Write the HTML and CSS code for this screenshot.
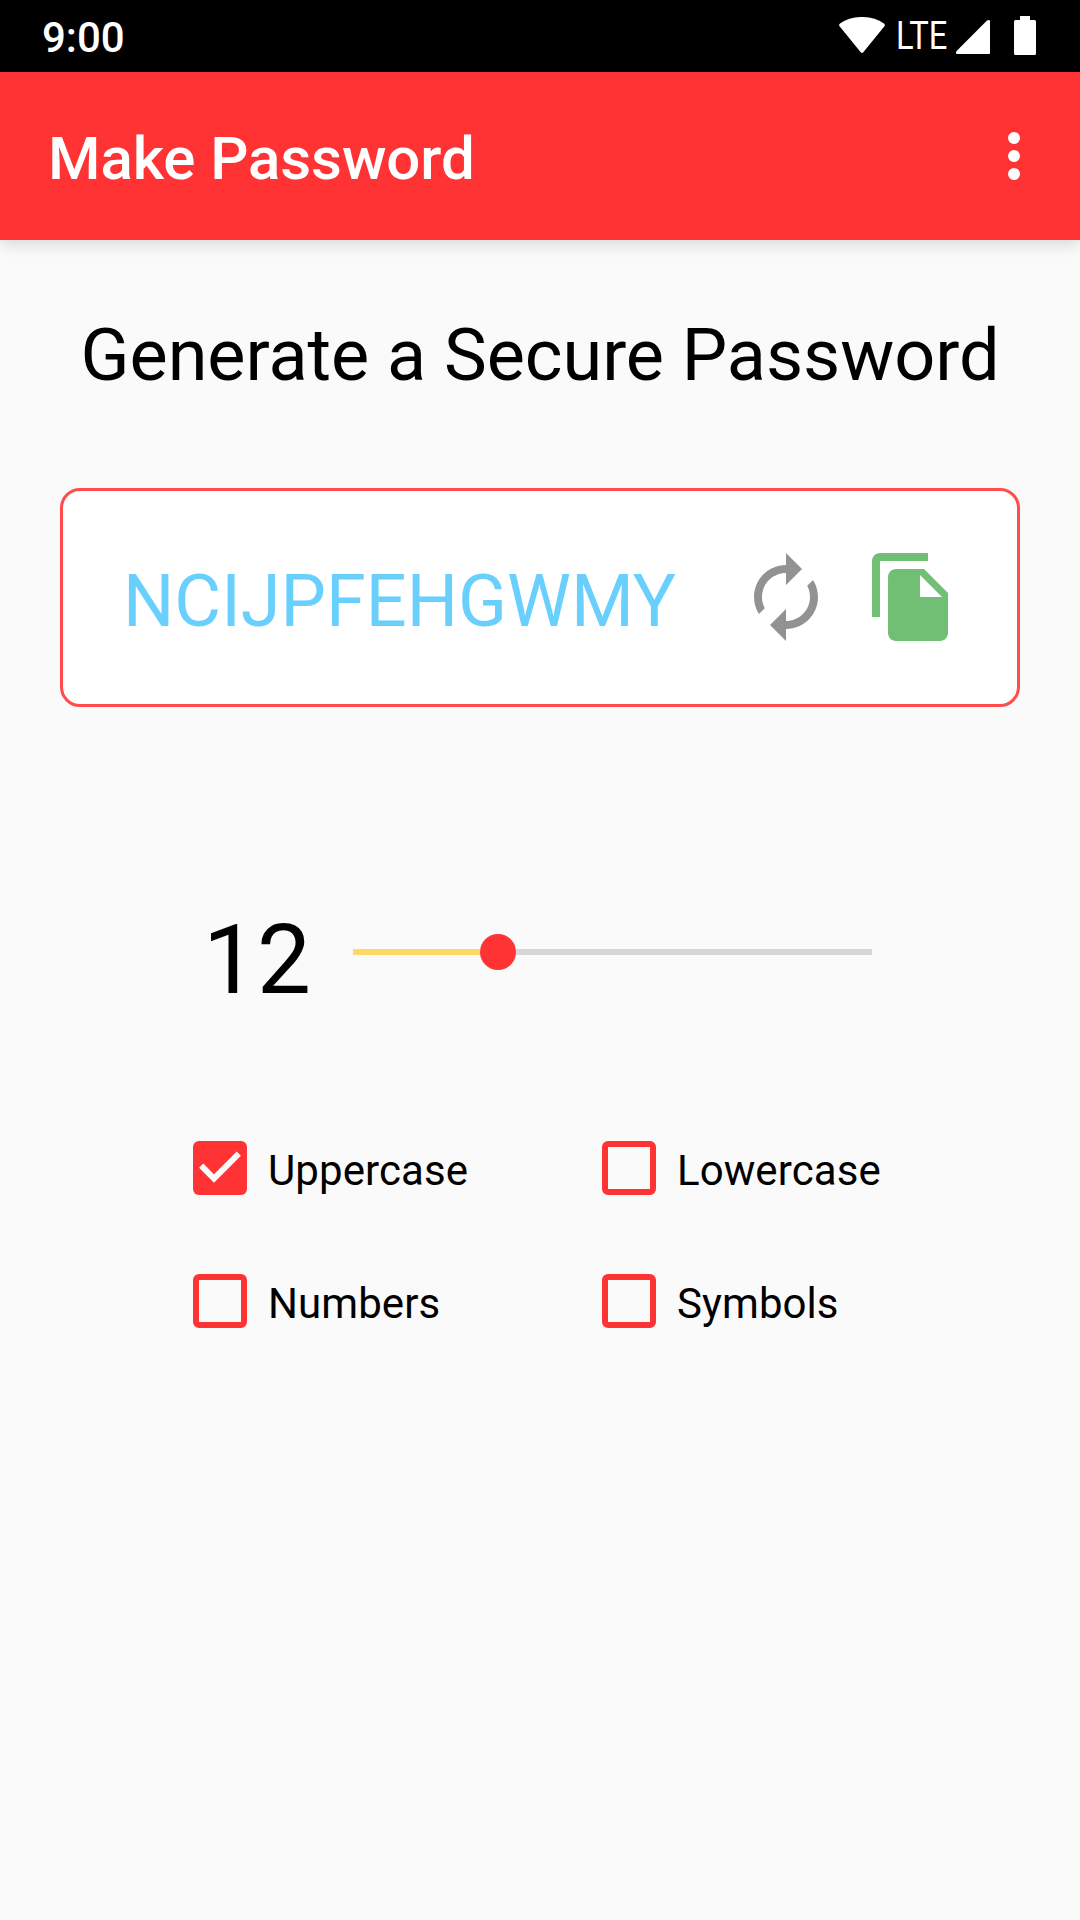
FILE: index.html
```html
<!DOCTYPE html>
<html lang="en">
<head>
<meta charset="utf-8">
<title>Make Password</title>
<link rel="stylesheet" href="styles.css">
</head>
<body>
<div class="status">
  <span class="time">9:00</span>
  <div class="indicators">
    <svg class="wifi" viewBox="0 0 46 36"><path d="M.6 9.200Q-.6 7.700 1 6.500C13-2.200 33-2.200 45 6.500Q46.600 7.700 45.400 9.200L24.500 35Q23 36.800 21.500 35Z" fill="#fff"/></svg>
    <span class="lte">LTE</span>
    <svg class="signal" viewBox="0 0 34 34"><path d="M31 .6Q32 0 33 0Q34 0 34 1V33Q34 34 33 34H1Q0 34 0 33Q0 32 .6 31Z" fill="#fff"/></svg>
    <svg class="battery" viewBox="0 0 22 39"><path d="M6 0H16V4H20.500Q22 4 22 5.500V37.500Q22 39 20.500 39H1.500Q0 39 0 37.500V5.500Q0 4 1.500 4H6Z" fill="#fff"/></svg>
  </div>
</div>
<header class="appbar">
  <h1 class="title">Make Password</h1>
  <svg class="more" viewBox="0 0 12 48" fill="#fff"><circle cx="6" cy="6" r="6"/><circle cx="6" cy="24" r="6"/><circle cx="6" cy="42" r="6"/></svg>
</header>
<main class="content">
  <h2 class="heading">Generate a Secure Password</h2>
  <section class="card">
    <span class="password">NCIJPFEHGWMY</span>
    <svg class="refresh" viewBox="0 0 24 24"><path fill="#929292" d="M12 6v3l4-4-4-4v3c-4.42 0-8 3.58-8 8 0 1.57.46 3.03 1.24 4.26L6.7 14.8c-.45-.83-.7-1.79-.7-2.8 0-3.31 2.69-6 6-6zm6.76 1.74L17.3 9.2c.44.84.7 1.79.7 2.8 0 3.31-2.69 6-6 6v-3l-4 4 4 4v-3c4.42 0 8-3.58 8-8 0-1.57-.46-3.03-1.24-4.26z"/></svg>
    <svg class="copy" viewBox="0 0 24 24"><path fill="#71bf74" d="M16 1H4c-1.100 0-2 .9-2 2v14h2V3h12V1zm-1 4l6 6v10c0 1.100-.9 2-2 2H7.990C6.890 23 6 22.100 6 21l.01-14c0-1.100.89-2 1.990-2h7zm-1 7h5.500L14 6.500V12z"/></svg>
  </section>
  <section class="length">
    <span class="number">12</span>
    <div class="track"><div class="fill"></div><div class="thumb"></div><div class="rest"></div></div>
  </section>
  <section class="options">
    <label class="option"><span class="box checked"><svg viewBox="0 0 54 54"><path d="M8.200 24.700L21 37.500L45.800 12.700" fill="none" stroke="#fafafa" stroke-width="6"/></svg></span><span class="label">Uppercase</span></label>
    <label class="option"><span class="box"></span><span class="label">Lowercase</span></label>
    <label class="option"><span class="box"></span><span class="label">Numbers</span></label>
    <label class="option"><span class="box"></span><span class="label">Symbols</span></label>
  </section>
</main>
</body>
</html>
```
FILE: styles.css
```css
* { box-sizing: border-box; }
body { margin: 0; height: 1920px; overflow: hidden; background: #fafafa; color: #000; font-family: Roboto, sans-serif; }
svg { display: block; flex: none; }
.status { height: 72px; background: #000; color: #fff; display: flex; justify-content: space-between; padding: 0 44px 0 42px; }
.time { font-size: 42px; font-weight: 500; line-height: 75px; }
.indicators { display: flex; }
.wifi { width: 46px; height: 36px; margin-top: 17px; }
.lte { width: 51px; font-size: 38px; line-height: 73px; margin-left: 11px; transform: scaleX(.86); transform-origin: 0 0; }
.signal { width: 34px; height: 34px; margin: 20px 0 0 9px; }
.battery { width: 22px; height: 39px; margin: 16px 0 0 24px; }
.appbar { height: 168px; background: #ff3333; color: #fff; display: flex; justify-content: space-between; padding: 0 60px 0 48px; box-shadow: 0 5px 14px rgba(0,0,0,.13); }
.title { margin: 0; font-size: 60px; font-weight: 500; line-height: 173px; letter-spacing: -.08px; }
.more { width: 12px; height: 48px; margin-top: 60px; }
.heading { margin: 74px 0 0; height: 84px; line-height: 84px; font-size: 72px; font-weight: 400; text-align: center; white-space: nowrap; letter-spacing: -.04px; }
.card { margin: 90px 60px 0; height: 219px; border: 3px solid #ff4d4d; border-radius: 20px; background: #fff; display: flex; align-items: flex-start; padding: 58px 0 0 60px; }
.password { width: 615px; font-size: 72px; line-height: 84px; margin-top: 11px; color: #69cffd; }
.refresh { width: 96px; height: 96px; }
.copy { width: 96px; height: 96px; margin-left: 30px; }
.length { display: flex; align-items: center; height: 120px; margin: 185px 0 0 203px; }
.number { width: 150px; font-size: 96px; padding-top: 16px; }
.track { display: flex; align-items: center; width: 519px; height: 36px; }
.fill { width: 127px; height: 6px; background: #ffd966; }
.thumb { width: 36px; height: 36px; border-radius: 50%; background: #ff3333; }
.rest { flex: 1; height: 6px; background: #d6d6d6; }
.options { display: grid; grid-template-columns: 409px 409px; row-gap: 79px; margin: 129px 0 0 193px; }
.option { display: flex; align-items: center; height: 54px; }
.box { width: 54px; height: 54px; border: 6px solid #ff3333; border-radius: 6px; }
.checked { border: 0; background: #ff3333; }
.label { font-size: 42px; margin-left: 21px; padding-top: 4px; letter-spacing: .08px; }
```
